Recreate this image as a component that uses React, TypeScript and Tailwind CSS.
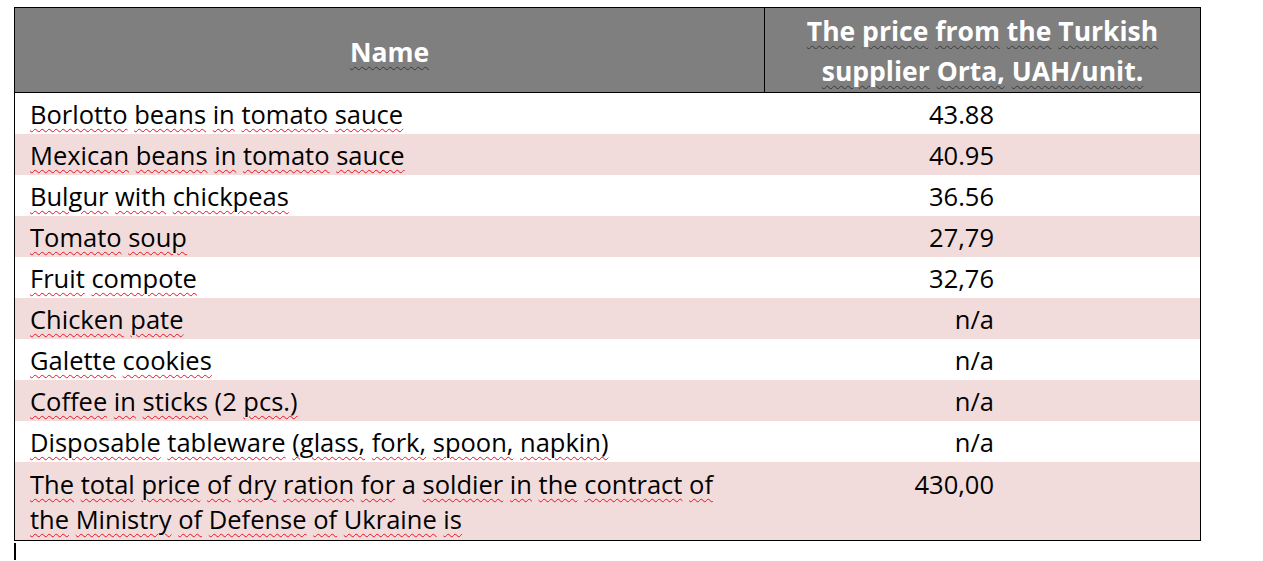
import React from "react";

type Row = { name: string; price: string; plain?: string[] };

const rows: Row[] = [
  { name: "Borlotto beans in tomato sauce", price: "43.88" },
  { name: "Mexican beans in tomato sauce", price: "40.95" },
  { name: "Bulgur with chickpeas", price: "36.56" },
  { name: "Tomato soup", price: "27,79" },
  { name: "Fruit compote", price: "32,76" },
  { name: "Chicken pate", price: "n/a" },
  { name: "Galette cookies", price: "n/a" },
  { name: "Coffee in sticks (2 pcs.)", price: "n/a", plain: ["(2"] },
  { name: "Disposable tableware (glass, fork, spoon, napkin)", price: "n/a" },
];

const total =
  "The total price of dry ration for a soldier in the contract of the Ministry of Defense of Ukraine is";

// Word's spell-check squiggle under every flagged word
const Squiggly = ({
  text,
  plain = [],
  dark = false,
}: {
  text: string;
  plain?: string[];
  dark?: boolean;
}) => {
  const words = text.split(" ");
  const deco = dark ? "decoration-[#3a3a3a]" : "decoration-[#e81123]";
  return (
    <>
      {words.map((w, i) => {
        const skip = plain.includes(w) || w === "a";
        return (
          <React.Fragment key={i}>
            <span
              className={
                skip
                  ? ""
                  : `underline decoration-wavy decoration-1 underline-offset-[4px] ${deco}`
              }
            >
              {w}
            </span>
            {i < words.length - 1 ? " " : ""}
          </React.Fragment>
        );
      })}
    </>
  );
};

const App = () => {
  return (
    <div className="w-[1263px] h-[561px] bg-white pl-[14px] pt-[7px] font-['Open_Sans',sans-serif] text-[25.5px] text-black overflow-hidden">
      <div className="w-[1187px] border border-black">
        <div className="flex h-[85px] bg-[#7f7f7f] border-b border-black font-bold text-white text-[26.5px]">
          <div className="w-[750px] border-r border-black flex items-center justify-center pt-[5px]">
            <Squiggly text="Name" dark />
          </div>
          <div className="flex-1 flex flex-col items-center justify-center leading-[40px] pt-[1px]">
            <div>
              <Squiggly text="The price from the Turkish" dark />
            </div>
            <div>
              <Squiggly text="supplier Orta, UAH/unit." dark />
            </div>
          </div>
        </div>
        {rows.map((r, i) => (
          <div
            key={r.name}
            className={`flex h-[41px] items-center pt-[2px] ${i % 2 === 1 ? "bg-[#f2dcdb]" : "bg-white"}`}
          >
            <div className="w-[751px] pl-[15px]">
              <Squiggly text={r.name} plain={r.plain} />
            </div>
            <div className="flex-1 text-right pr-[206px]">{r.price}</div>
          </div>
        ))}
        <div className="flex h-[78px] bg-[#f2dcdb] leading-[35px] pt-[5px]">
          <div className="w-[751px] pl-[15px] pr-[20px]">
            <Squiggly text={total} />
          </div>
          <div className="flex-1 text-right pr-[206px]">430,00</div>
        </div>
      </div>
      <div className="mt-[2px] w-[2px] h-[17px] bg-black" />
    </div>
  );
};

export default App;
